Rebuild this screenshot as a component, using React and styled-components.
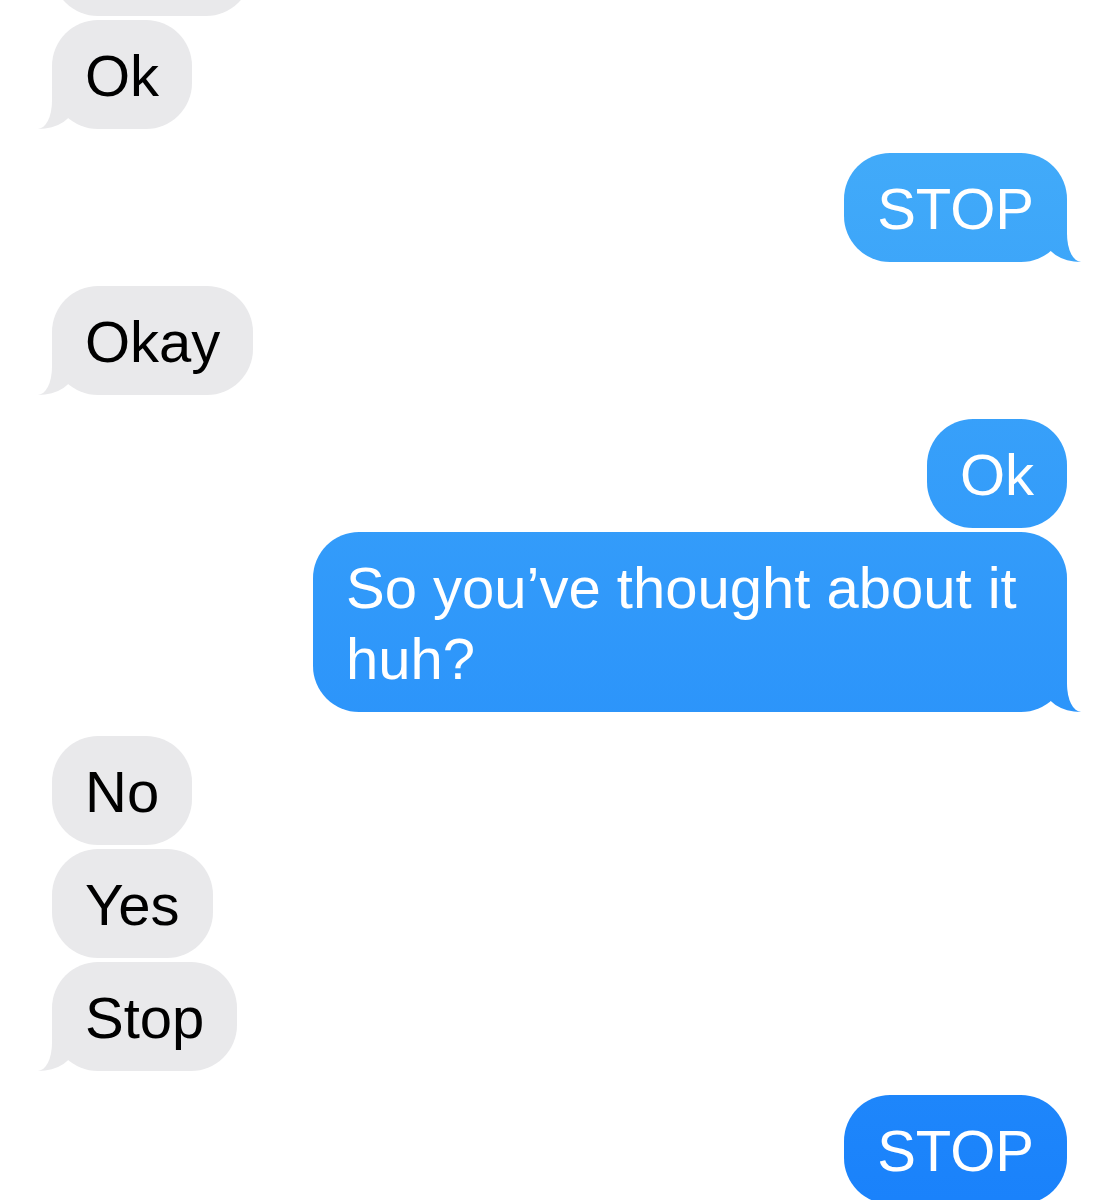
import styled, { createGlobalStyle, css } from 'styled-components';

const GlobalStyle = createGlobalStyle`
  html, body {
    margin: 0;
    background: #fff;
    overflow: hidden;
  }
  body {
    font-family: "Liberation Sans", Arial, "Noto Sans", sans-serif;
    -webkit-font-smoothing: antialiased;
  }
`;

const GRAY = '#e9e9eb';
const BLUE = 'linear-gradient(180deg, #47b0f9 0%, #1a82fb 100%) fixed';

// the last group runs on past the bottom of the screen, so it has no tail yet
const messages = [
  { mine: false, lines: [{ text: '', width: 200 }, { text: 'Ok' }] },
  { mine: true, lines: [{ text: 'STOP' }] },
  { mine: false, lines: [{ text: 'Okay' }] },
  { mine: true, lines: [{ text: 'Ok' }, { text: 'So you’ve thought about it huh?' }] },
  { mine: false, lines: [{ text: 'No' }, { text: 'Yes' }, { text: 'Stop' }] },
  { mine: true, open: true, lines: [{ text: 'STOP' }] },
];

const App = () => {
  return (
    <>
      <GlobalStyle />
      <Thread>
        {messages.map((group, gi) => (
          <Group key={gi} $mine={group.mine}>
            {group.lines.map((line, li) => (
              <Bubble
                key={li}
                $mine={group.mine}
                $w={line.width}
                $tail={!group.open && li === group.lines.length - 1}
              >
                {line.text}
              </Bubble>
            ))}
          </Group>
        ))}
      </Thread>
    </>
  );
};

export default App;

// own stacking context so the tails (z-index -1) stay above the page background
const Thread = styled.main`
  position: relative;
  z-index: 0;
  display: flex;
  flex-direction: column;
  gap: 24px;
  padding: 0 52px;
  margin-top: -93px;
`;

const Group = styled.section`
  display: flex;
  flex-direction: column;
  gap: 4px;
  align-items: ${p => (p.$mine ? 'flex-end' : 'flex-start')};
`;

// tail = a coloured horn (::before) with a white scoop (::after) cut from its top
const tailLeft = css`
  &::before {
    content: '';
    position: absolute;
    z-index: -1;
    bottom: 0;
    left: -14px;
    width: 36px;
    height: 46px;
    background: ${GRAY};
    border-bottom-right-radius: 36px 24px;
  }
  &::after {
    content: '';
    position: absolute;
    z-index: -1;
    bottom: 0;
    left: -34px;
    width: 34px;
    height: 50px;
    background: #fff;
    border-bottom-right-radius: 14px 28px;
  }
`;

const tailRight = css`
  &::before {
    content: '';
    position: absolute;
    z-index: -1;
    bottom: 0;
    right: -14px;
    width: 36px;
    height: 46px;
    background: ${BLUE};
    border-bottom-left-radius: 36px 24px;
  }
  &::after {
    content: '';
    position: absolute;
    z-index: -1;
    bottom: 0;
    right: -34px;
    width: 34px;
    height: 50px;
    background: #fff;
    border-bottom-left-radius: 14px 28px;
  }
`;

const Bubble = styled.div`
  position: relative;
  box-sizing: border-box;
  max-width: 754px;
  min-width: ${p => (p.$w ? `${p.$w}px` : '0')};
  min-height: 109px;
  padding: 20px 33px 18px;
  border-radius: 46px;
  font-size: 58px;
  line-height: 71px;
  ${p =>
    p.$mine
      ? css`
          background: ${BLUE};
          color: #fff;
        `
      : css`
          background: ${GRAY};
          color: #000;
        `}
  ${p => p.$tail && (p.$mine ? tailRight : tailLeft)}
`;
